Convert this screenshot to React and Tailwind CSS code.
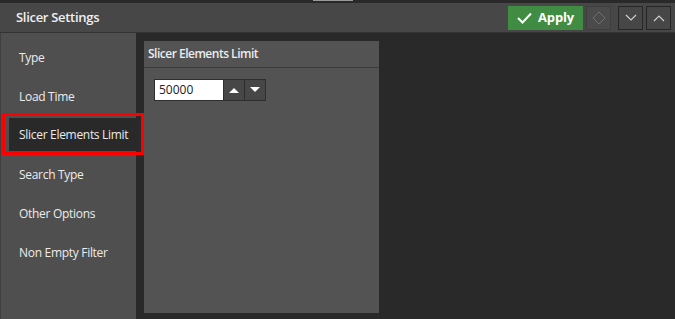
import React from "react";

const font = { fontFamily: '"Segoe UI", "Open Sans", "Noto Sans", sans-serif' };

function Chevron({ up }) {
  return (
    <svg width="12" height="8" viewBox="0 0 12 8" fill="none">
      <path
        d={up ? "M1 7 L6 2 L11 7" : "M1 1 L6 6 L11 1"}
        stroke="#d0d0d0"
        strokeWidth="1.2"
      />
    </svg>
  );
}

export default function App() {
  const items = ["Type", "Load Time", "Slicer Elements Limit", "Search Type", "Other Options", "Non Empty Filter"];
  return (
    <div className="w-[675px] h-[319px] bg-[#292929] flex flex-col overflow-hidden" style={font}>
      <div className="h-[3px] flex">
        <div className="ml-[313px] w-[40px] h-[1px] bg-[#9a9a9a]" />
      </div>
      <div className="h-[30px] bg-[#474747] flex items-center pl-[16px] pr-[4px] border-b border-[#333]">
        <div className="text-[13px] font-semibold tracking-[-0.3px] text-[#f0f0f0] flex-1">Slicer Settings</div>
        <div className="h-[24px] w-[75px] bg-[#3f8c42] flex items-center justify-center gap-[6px] text-white text-[13px] font-bold tracking-[-0.2px]">
          <svg width="15" height="12" viewBox="0 0 15 12" fill="none">
            <path d="M1 6 L5.5 10.5 L14 1.5" stroke="white" strokeWidth="2" />
          </svg>
          <span>Apply</span>
        </div>
        <div className="ml-[3px] h-[24px] w-[25px] bg-[#4b4b4b] border border-[#3e3e3e] flex items-center justify-center">
          <svg width="14" height="14" viewBox="0 0 14 14" fill="none">
            <path d="M7 1 L13 7 L7 13 L1 7 Z" stroke="#6e6e6e" strokeWidth="1" />
          </svg>
        </div>
        <div className="ml-[7px] h-[24px] w-[25px] border border-[#252525] flex items-center justify-center">
          <Chevron />
        </div>
        <div className="ml-[3px] h-[24px] w-[25px] border border-[#252525] flex items-center justify-center">
          <Chevron up />
        </div>
      </div>
      <div className="flex flex-1">
        <div className="w-[136px] bg-[#4f4f4f] border-l border-[#3f3f3f] pt-[5px] flex flex-col">
          {items.map((t, i) => (
            <div key={t} className="h-[39px] relative flex items-center">
              {i === 2 ? (
                <>
                  <div className="ml-[8px] mt-[-2px] h-[33px] flex-1 bg-[#292929] flex items-center pl-[10px] text-[12px] tracking-[-0.3px] text-[#ececec]">
                    {t}
                  </div>
                  <div className="absolute left-[1px] top-[-3px] w-[142px] h-[42px] border-[3px] border-[#ff0000]" />
                </>
              ) : (
                <div className="pl-[18px] text-[12px] tracking-[-0.3px] text-[#ececec]">{t}</div>
              )}
            </div>
          ))}
        </div>
        <div className="ml-[8px] mt-[8px] w-[235px] h-[272px] bg-[#535353] flex flex-col">
          <div className="h-[27px] border-b border-[#3a3a3a] flex items-center pl-[4px] text-[12px] font-semibold tracking-[-0.5px] text-[#ececec]">
            Slicer Elements Limit
          </div>
          <div className="flex mt-[11px] ml-[10px] h-[22px]">
            <div className="w-[70px] h-[22px] bg-white border border-[#2e2e2e] flex items-center pl-[4px] text-[12px] text-[#222]">
              50000
            </div>
            <div className="w-[21px] h-[22px] bg-[#474747] border border-[#2e2e2e] border-l-0 flex items-center justify-center">
              <svg width="10" height="6" viewBox="0 0 10 6"><path d="M0 6 L5 1 L10 6 Z" fill="white" /></svg>
            </div>
            <div className="w-[21px] h-[22px] bg-[#474747] border border-[#2e2e2e] border-l-0 flex items-center justify-center">
              <svg width="10" height="6" viewBox="0 0 10 6"><path d="M0 0 L5 5 L10 0 Z" fill="white" /></svg>
            </div>
          </div>
        </div>
      </div>
    </div>
  );
}
